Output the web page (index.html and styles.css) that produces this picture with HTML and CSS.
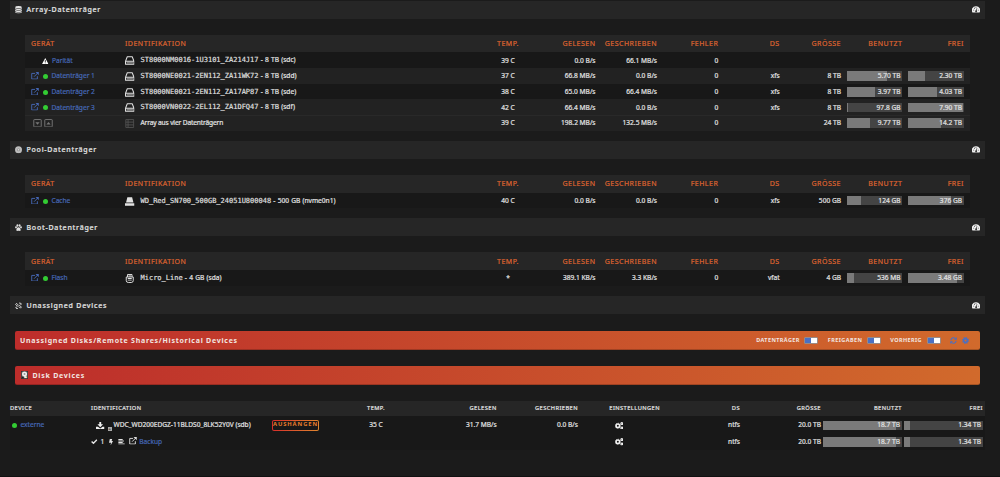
FILE: index.html
```html
<!DOCTYPE html>
<html lang="de">
<head>
<meta charset="utf-8">
<title>Main</title>
<link rel="stylesheet" href="styles.css">
</head>
<body>
<svg class="defs" aria-hidden="true">
  <symbol id="db" viewBox="0 0 14 16"><ellipse cx="7" cy="2.5" rx="7" ry="2.5"/><path d="M0 4.2q7 3.6 14 0v2.8q-7 3.6-14 0zM0 8.2q7 3.6 14 0v2.8q-7 3.6-14 0zM0 12q7 3.6 14 0v1.8q-7 4-14 0z"/></symbol>
  <symbol id="disc" viewBox="0 0 16 16"><circle cx="8" cy="8" r="8" fill-opacity=".8"/><circle cx="8" cy="8" r="3.6" fill="#999"/><circle cx="8" cy="8" r="1.5"/></symbol>
  <symbol id="paw" viewBox="0 0 16 16"><ellipse cx="2.3" cy="7" rx="2.2" ry="2.6"/><ellipse cx="5.5" cy="3" rx="2.2" ry="2.8"/><ellipse cx="10.5" cy="3" rx="2.2" ry="2.8"/><ellipse cx="13.7" cy="7" rx="2.2" ry="2.6"/><path d="M8 7c3 0 5 4 5 6.300 0 2.700-3 1.700-5 1.700s-5 1-5-1.700C3 11 5 7 8 7z"/></symbol>
  <symbol id="unlink" viewBox="0 0 16 16"><g fill="none" stroke="currentColor" stroke-width="2.200"><path d="M7 6L3.500 2.500 1.500 5l4 4 2-1M9 10l3.500 3.500 2-2.500-4-4-2 1M9 3l2-1.500 3.500 2L13 6M3 10l-1 3 3 2 2-2"/></g></symbol>
  <symbol id="gauge" viewBox="0 0 18 15"><path fill-rule="evenodd" d="M9 0a9 9 0 0 0-8 14h16A9 9 0 0 0 9 0zM3 8h1.800v1.800H3zM4.500 3.800h1.800v1.800H4.500zM8 2h1.800v1.800H8zM13.200 8H15v1.800h-1.800zM11 4l1 .6-1.600 5.100a2 2 0 1 1-1.300-.4z"/></symbol>
  <symbol id="ext" viewBox="0 0 16 16"><path fill="none" stroke="currentColor" stroke-width="2" d="M8 3H1v12h12V9M6 10l8-8"/><path d="M9 0h7v7z"/></symbol>
  <symbol id="warn" viewBox="0 0 16 15"><path fill-rule="evenodd" d="M8 0l8 15H0zM7 5v5h2V5zM7 11.300v2h2v-2z"/></symbol>
  <symbol id="hdd" viewBox="0 0 18 16"><path fill="none" stroke="currentColor" stroke-width="1.900" stroke-linejoin="round" d="M4.300 1h9.400L17 9.500V15H1V9.500zM1 9.500h16"/><path d="M3 11.900h12v1.300H3z"/></symbol>
  <symbol id="nvme" viewBox="0 0 18 16"><path d="M4.500 0h9L16 10H2zM0 11.200h18V16H0z"/></symbol>
  <symbol id="usb" viewBox="0 0 16 18"><path fill="none" stroke="currentColor" stroke-width="1.900" d="M3.500 6V1h9v5M1 6h14v7q0 4-4 4H5q-4 0-4-4z"/><path d="M5.500 3h5v2h-5zM4 8h8v2H4zM4 11.500h8V13H4z"/></symbol>
  <symbol id="list" viewBox="0 0 16 16"><path fill="none" stroke="currentColor" stroke-width="1.500" d="M1 1h14v14H1zM1 5.500h14M1 10.500h14M5 1v14"/></symbol>
  <symbol id="down" viewBox="0 0 16 16"><rect x="1" y="1" width="14" height="14" rx="1" fill="none" stroke="currentColor" stroke-width="1.800"/><path d="M4 6h8l-4 5z"/></symbol>
  <symbol id="up" viewBox="0 0 16 16"><rect x="1" y="1" width="14" height="14" rx="1" fill="none" stroke="currentColor" stroke-width="1.800"/><path d="M4 10.500h8l-4-5z"/></symbol>
  <symbol id="drive" viewBox="0 0 14 16"><path fill="#222" d="M0 0h14v16H0z"/><path fill="#777" d="M1 1h12v14H1z"/><circle cx="7" cy="6" r="5" fill="#eee"/><circle cx="7" cy="6" r="2" fill="#999"/><path fill="#222" d="M1.500 11l4 1v3h-4z"/><path fill="#eee" d="M6 9h3l2 5H7z"/><path fill="#e9d88e" d="M10 11h2v3h-2z"/></symbol>
  <symbol id="save" viewBox="0 0 18 16"><path d="M7 0h4v5h4l-6 6-6-6h4zM0 10h4l5 4 5-4h4v6H0z"/></symbol>
  <symbol id="check" viewBox="0 0 16 13"><path fill="none" stroke="currentColor" stroke-width="3.600" d="M1.500 6L6 10.200 14.500 1.800"/></symbol>
  <symbol id="bolt" viewBox="0 0 10 16"><path d="M2 0h6L6.500 5H10L4 16l1-7H0z"/></symbol>
  <symbol id="align" viewBox="0 0 16 14"><path d="M0 0h11v2.800H0zM0 3.800h14v2.800H0zM0 7.600h11v2.800H0zM0 11.300h16V14H0z"/></symbol>
  <symbol id="cogs" viewBox="0 0 18 16"><circle cx="6" cy="8" r="3.800" fill="none" stroke="currentColor" stroke-width="3.400"/><circle cx="6" cy="8" r="5.500" fill="none" stroke="currentColor" stroke-width="1.500" stroke-dasharray="2.160"/><circle cx="14.500" cy="3.300" r="2" fill="none" stroke="currentColor" stroke-width="2.600"/><circle cx="14.500" cy="12.700" r="2" fill="none" stroke="currentColor" stroke-width="2.600"/></symbol>
  <symbol id="sync" viewBox="0 0 16 16"><path fill="none" stroke="currentColor" stroke-width="2.400" d="M2 7a6.200 6.200 0 0 1 11-3M14 9a6.200 6.200 0 0 1-11 3"/><path d="M15.500 0v6.500H9zM.5 16V9.500H7z"/></symbol>
  <symbol id="cog" viewBox="0 0 16 16"><circle cx="8" cy="8" r="4.200" fill="none" stroke="currentColor" stroke-width="3.800"/><circle cx="8" cy="8" r="6.800" fill="none" stroke="currentColor" stroke-width="2.400" stroke-dasharray="2.670"/></symbol>
</svg>

<main class="page">
  <section class="group">
    <h2 class="bar"><svg class="i-title"><use href="#db"/></svg><span>Array-Datenträger</span><svg class="i-gauge"><use href="#gauge"/></svg></h2>
    <div class="disks">
      <div class="row head"><span>GERÄT</span><span>IDENTIFIKATION</span><span class="c">TEMP.</span><span>GELESEN</span><span>GESCHRIEBEN</span><span>FEHLER</span><span>DS</span><span>GRÖSSE</span><span>BENUTZT</span><span>FREI</span></div>
      <div class="row"><span class="dev parity"><svg class="i-warn"><use href="#warn"/></svg><a>Parität</a></span><span class="id"><svg class="i-disk"><use href="#hdd"/></svg><span><tt>ST8000NM0016-1U3101_ZA214J17</tt> - 8 TB (sdc)</span></span><span class="c">39 C</span><span>0.0 B/s</span><span>66.1 MB/s</span><span>0</span></div>
      <div class="row alt"><span class="dev"><svg class="i-ext"><use href="#ext"/></svg><i class="dot"></i><a>Datenträger 1</a></span><span class="id"><svg class="i-disk"><use href="#hdd"/></svg><span><tt>ST8000NE0021-2EN112_ZA11WK72</tt> - 8 TB (sdd)</span></span><span class="c">37 C</span><span>66.8 MB/s</span><span>0.0 B/s</span><span>0</span><span>xfs</span><span>8 TB</span><span class="use"><i style="width:72%"></i><b>5.70 TB</b></span><span class="use"><i style="width:29%"></i><b>2.30 TB</b></span></div>
      <div class="row"><span class="dev"><svg class="i-ext"><use href="#ext"/></svg><i class="dot"></i><a>Datenträger 2</a></span><span class="id"><svg class="i-disk"><use href="#hdd"/></svg><span><tt>ST8000NE0021-2EN112_ZA17AP87</tt> - 8 TB (sde)</span></span><span class="c">38 C</span><span>65.0 MB/s</span><span>66.4 MB/s</span><span>0</span><span>xfs</span><span>8 TB</span><span class="use"><i style="width:50%"></i><b>3.97 TB</b></span><span class="use"><i style="width:51%"></i><b>4.03 TB</b></span></div>
      <div class="row alt"><span class="dev"><svg class="i-ext"><use href="#ext"/></svg><i class="dot"></i><a>Datenträger 3</a></span><span class="id"><svg class="i-disk"><use href="#hdd"/></svg><span><tt>ST8000VN0022-2EL112_ZA1DFQ47</tt> - 8 TB (sdf)</span></span><span class="c">42 C</span><span>66.4 MB/s</span><span>0.0 B/s</span><span>0</span><span>xfs</span><span>8 TB</span><span class="use"><i style="width:1.5%"></i><b>97.8 GB</b></span><span class="use"><i style="width:99%"></i><b>7.90 TB</b></span></div>
      <div class="row alt total"><span class="dev"><svg class="i-box"><use href="#down"/></svg><svg class="i-box"><use href="#up"/></svg></span><span class="id"><svg class="i-disk dim"><use href="#list"/></svg><span class="sum">Array aus vier Datenträgern</span></span><span class="c">39 C</span><span>198.2 MB/s</span><span>132.5 MB/s</span><span>0</span><span></span><span>24 TB</span><span class="use"><i style="width:41%"></i><b>9.77 TB</b></span><span class="use"><i style="width:59%"></i><b>14.2 TB</b></span></div>
    </div>
  </section>

  <section class="group">
    <h2 class="bar"><svg class="i-title"><use href="#disc"/></svg><span>Pool-Datenträger</span><svg class="i-gauge"><use href="#gauge"/></svg></h2>
    <div class="disks">
      <div class="row head"><span>GERÄT</span><span>IDENTIFIKATION</span><span class="c">TEMP.</span><span>GELESEN</span><span>GESCHRIEBEN</span><span>FEHLER</span><span>DS</span><span>GRÖSSE</span><span>BENUTZT</span><span>FREI</span></div>
      <div class="row"><span class="dev"><svg class="i-ext"><use href="#ext"/></svg><i class="dot"></i><a>Cache</a></span><span class="id"><svg class="i-disk"><use href="#nvme"/></svg><span><tt>WD_Red_SN700_500GB_24051U800048</tt> - 500 GB (nvme0n1)</span></span><span class="c">40 C</span><span>0.0 B/s</span><span>0.0 B/s</span><span>0</span><span>xfs</span><span>500 GB</span><span class="use"><i style="width:25%"></i><b>124 GB</b></span><span class="use"><i style="width:76%"></i><b>376 GB</b></span></div>
    </div>
  </section>

  <section class="group">
    <h2 class="bar"><svg class="i-title"><use href="#paw"/></svg><span>Boot-Datenträger</span><svg class="i-gauge"><use href="#gauge"/></svg></h2>
    <div class="disks">
      <div class="row head"><span>GERÄT</span><span>IDENTIFIKATION</span><span class="c">TEMP.</span><span>GELESEN</span><span>GESCHRIEBEN</span><span>FEHLER</span><span>DS</span><span>GRÖSSE</span><span>BENUTZT</span><span>FREI</span></div>
      <div class="row"><span class="dev"><svg class="i-ext"><use href="#ext"/></svg><i class="dot"></i><a>Flash</a></span><span class="id"><svg class="i-disk"><use href="#usb"/></svg><span><tt>Micro_Line</tt> - 4 GB (sda)</span></span><span class="c">*</span><span>389.1 KB/s</span><span>3.3 KB/s</span><span>0</span><span>vfat</span><span>4 GB</span><span class="use"><i style="width:13%"></i><b>536 MB</b></span><span class="use"><i style="width:88%"></i><b>3.48 GB</b></span></div>
    </div>
  </section>

  <section class="group unassigned">
    <h2 class="bar"><svg class="i-title"><use href="#unlink"/></svg><span>Unassigned Devices</span><svg class="i-gauge"><use href="#gauge"/></svg></h2>
    <h3 class="banner"><span class="banner-title">Unassigned Disks/Remote Shares/Historical Devices</span>
      <span class="switches"><span class="switch">DATENTRÄGER<i></i></span><span class="switch">FREIGABEN<i></i></span><span class="switch">VORHERIG<i></i></span><svg class="i-act"><use href="#sync"/></svg><svg class="i-act"><use href="#cog"/></svg></span></h3>
    <h3 class="banner"><svg class="i-drive"><use href="#drive"/></svg><span class="banner-title">Disk Devices</span></h3>
    <div class="ext-disks">
      <div class="xrow xhead"><span>DEVICE</span><span>IDENTIFICATION</span><span></span><span class="c">TEMP.</span><span>GELESEN</span><span>GESCHRIEBEN</span><span class="c">EINSTELLUNGEN</span><span>DS</span><span>GRÖSSE</span><span>BENUTZT</span><span>FREI</span></div>
      <div class="xrow first"><span class="xdev"><i class="dot"></i><a>externe</a></span><span class="xid"><svg class="i-save"><use href="#save"/></svg><i class="plus">+</i><span>WDC_WD200EDGZ-11BLDS0_8LK52Y0V (sdb)</span></span><span class="btn-cell"><button>AUSHÄNGEN</button></span><span class="c">35 C</span><span>31.7 MB/s</span><span>0.0 B/s</span><span class="c"><svg class="i-cogs"><use href="#cogs"/></svg></span><span>ntfs</span><span>20.0 TB</span><span class="use"><i style="width:93%"></i><b>18.7 TB</b></span><span class="use"><i style="width:7%"></i><b>1.34 TB</b></span></div>
      <div class="xrow"><span></span><span class="part"><svg class="i-check"><use href="#check"/></svg><span>1</span><svg class="i-bolt"><use href="#bolt"/></svg><svg class="i-align"><use href="#align"/></svg><svg class="i-ext"><use href="#ext"/></svg><a>Backup</a></span><span></span><span></span><span></span><span></span><span class="c"><svg class="i-cogs"><use href="#cogs"/></svg></span><span>ntfs</span><span>20.0 TB</span><span class="use"><i style="width:93%"></i><b>18.7 TB</b></span><span class="use"><i style="width:7%"></i><b>1.34 TB</b></span></div>
    </div>
  </section>
</main>
</body>
</html>
```
FILE: styles.css
```css
* { box-sizing: border-box; }
body {
  margin: 0;
  height: 477px;
  overflow: hidden;
  background: #1b1b1b;
  border-bottom: 1px solid #111;
  color: #e2e2e2;
  font: 6.6px/1 "Noto Sans", "Open Sans", sans-serif;
  -webkit-text-stroke: .2px;
}
.defs { position: absolute; width: 0; height: 0; }
svg { display: block; flex: none; fill: currentColor; }
a { color: #4567b4; }
i { font-style: normal; }
.page { padding: .7px 15px 0 10px; }
.group { margin-bottom: 10px; }
.unassigned { padding-top: .6px; }

/* Section title bars */
.bar {
  display: flex;
  align-items: center;
  height: 18.2px;
  margin: 0 0 16px;
  padding: 0 5px;
  background: #262626;
  font-size: 7px;
  font-weight: 500;
  letter-spacing: .78px;
}
.i-title { width: 7px; height: 7.500px; margin-right: 4.500px; }
.i-gauge { width: 8px; height: 7px; margin-left: auto; color: #f0f0f0; }

/* Disk tables */
.disks { margin: 0 15px; }
.row {
  display: grid;
  grid-template-columns: 94px 352px 62px 56.500px 61.500px 61.300px 61.300px 61.400px 61.500px 61.500px;
  align-items: center;
  height: 15.700px;
  padding: 1.400px 0 0 6px;
  background: #181818;
  white-space: nowrap;
}
.row > span:nth-child(n+4) { text-align: right; }
.alt { background: #222; }
.total { border-top: 1px solid #292929; padding-top: .5px; }
.head {
  height: 17.500px;
  padding-top: 0;
  background: #262626;
  color: #dd6330;
  font-size: 7px;
  letter-spacing: .5px;
}
.row .c, .xrow .c { text-align: center; }
.dev, .id, .xdev, .xid, .part { display: flex; align-items: center; }
.i-ext { width: 8px; height: 7.500px; margin: 0 0 1.500px -.5px; color: #4567b4; }
.dot { width: 5px; height: 5px; margin: 0 4px; border-radius: 50%; background: #33cc33; }
.parity { padding-left: 11px; }
.i-warn { width: 6.500px; height: 6px; margin-right: 3.500px; color: #fff; }
.i-box { width: 9px; height: 8.500px; margin: 0 1px 1.500px 1.500px; color: #777; }
.i-disk { width: 9.500px; height: 9px; margin-right: 6px; }
.id { word-spacing: .5px; }
.sum { letter-spacing: -.13px; word-spacing: 0; }
.dim { color: #555; }
tt { font: 7px/1 "DejaVu Sans Mono", monospace; -webkit-text-stroke: .15px; }

/* Usage meters */
.row > .use { margin: -1px 0 0 6px; }
.use {
  display: grid;
  align-items: center;
  height: 9.500px;
  background: #444;
}
.use i, .use b { grid-area: 1 / 1; }
.use i { height: 100%; background: #7a7a7a; }
.use b { padding: .900px 2px 0 0; font-weight: 400; text-align: right; }

/* Gradient banners */
.banner {
  display: flex;
  align-items: center;
  height: 18.700px;
  margin: 0 5px 16.400px;
  padding: 1px 10px 0 5px;
  border-radius: 2px;
  border-bottom: 1px solid #0003;
  background: linear-gradient(90deg, #bd2d2b, #d16a2c);
  color: #f2e6e2;
  font-size: 7px;
  font-weight: 700;
  -webkit-text-stroke: 0;
}
.bar + .banner { margin-top: 16.600px; }
.banner-title { letter-spacing: .75px; }
.i-drive { width: 7px; height: 8px; margin: 0 4.500px 0 1px; }
.switches { display: flex; align-items: center; margin-left: auto; }
.switch { display: flex; align-items: center; margin-right: 9.500px; font-size: 5.500px; letter-spacing: .4px; }
.switch i {
  width: 14px;
  height: 7px;
  margin-left: 4.500px;
  border: .5px solid #9a8b86;
  border-radius: 1px;
  background: linear-gradient(90deg, #4a70c4 50%, #fff 50%);
}
.i-act { width: 7px; height: 7px; margin-right: 5px; color: #4a70c4; }
.i-act:last-child { margin-right: 1px; }

/* Unassigned disks table */
.xrow {
  display: grid;
  grid-template-columns: 81px 181px 74px 60px 90.700px 81.300px 82px 80px 81px 81px 81px;
  align-items: center;
  height: 16.500px;
  background: #181818;
  white-space: nowrap;
}
.xrow > span:nth-child(n+5) { text-align: right; }
.xhead { height: 15px; background: #262626; font-size: 5.700px; letter-spacing: .45px; }
.first { height: 17.500px; padding-top: 1px; }
.xrow > .use { margin-left: 2px; }
.xdev .dot { margin: 0 4px 0 1.500px; }
.i-save { width: 8.500px; height: 7.500px; margin-left: 5px; color: #f0f0f0; }
.plus { width: 4.500px; height: 4.500px; margin: 7px 1.500px 0 3px; background: #aaa; color: #555; font-size: 4px; line-height: 4px; text-align: center; }
.btn-cell button {
  display: block;
  width: 46.500px;
  height: 11.500px;
  padding: 0;
  border: 1px solid transparent;
  border-radius: 2px;
  background: linear-gradient(#181818, #181818) padding-box, linear-gradient(90deg, #d82e2a, #e0872f) border-box;
  color: #e97c2b;
  font: 700 5.800px/1 "Noto Sans", sans-serif;
  letter-spacing: .9px;
  -webkit-text-stroke: 0;
}
.i-cogs { width: 8.500px; height: 7.500px; margin: 0 auto; color: #f0f0f0; }
.i-check { width: 6.500px; height: 5.500px; margin-right: 3px; }
.i-bolt { width: 4px; height: 6.500px; margin: 0 4.500px 0 5px; }
.i-align { width: 7px; height: 5.500px; margin-right: 4.500px; }
.part .i-ext { margin-right: 2.500px; color: #dedede; }
```
